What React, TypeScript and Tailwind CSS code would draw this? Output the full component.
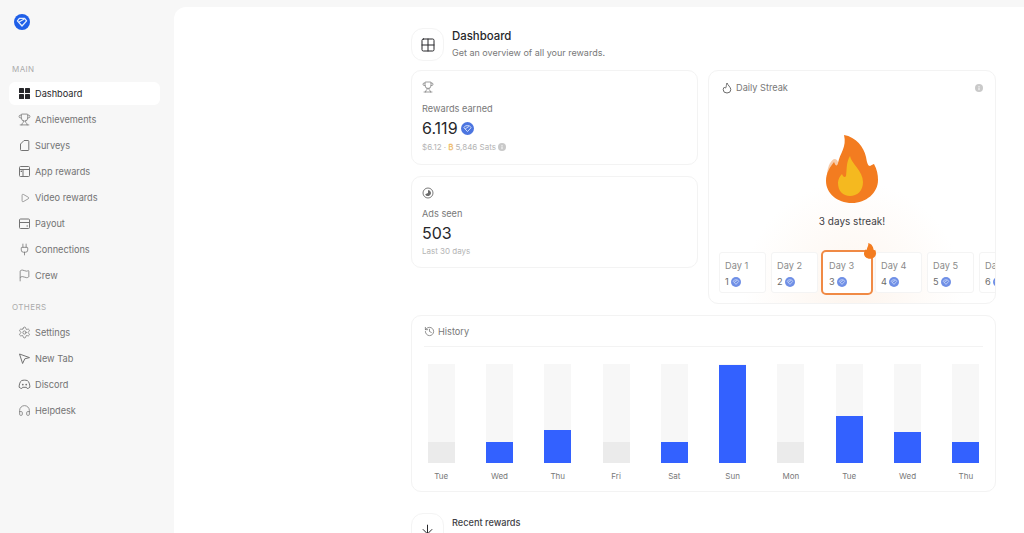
import { ArrowDown, Flag, Grid2x2, Headphones, History, Play, Plug, Settings, Trophy } from 'lucide-react';

function DashIcon() {
  return (
    <svg width="13" height="13" viewBox="0 0 13 13" fill="#27272a">
      <rect x="1" y="1" width="5" height="5" rx="0.6" />
      <rect x="7" y="1" width="5" height="5" rx="0.6" />
      <rect x="1" y="7" width="5" height="5" rx="0.6" />
      <rect x="7" y="7" width="5" height="5" rx="0.6" />
    </svg>
  );
}

function SurveyIcon() {
  return (
    <svg width="13" height="13" viewBox="0 0 13 13" fill="none" stroke="currentColor" strokeWidth="1">
      <path d="M2.5 5 L6 1.5 H10 A0.8 0.8 0 0 1 10.8 2.3 V10.7 A0.8 0.8 0 0 1 10 11.5 H3.3 A0.8 0.8 0 0 1 2.5 10.7 Z" strokeLinejoin="round" />
    </svg>
  );
}

function AppIcon() {
  return (
    <svg width="13" height="13" viewBox="0 0 13 13" fill="none" stroke="currentColor" strokeWidth="1">
      <rect x="1.5" y="1.5" width="10" height="10" rx="1" />
      <path d="M1.5 4.5 H11.5 M5 4.5 V11.5" />
      <rect x="2.6" y="5.6" width="1.4" height="1.4" fill="currentColor" stroke="none" />
    </svg>
  );
}

function PayoutIcon() {
  return (
    <svg width="13" height="13" viewBox="0 0 13 13" fill="none" stroke="currentColor" strokeWidth="1">
      <rect x="1.5" y="2" width="10" height="9.5" rx="1" />
      <path d="M1.5 5.5 H11.5" />
      <path d="M8.5 9 H10" />
    </svg>
  );
}

function CursorIcon() {
  return (
    <svg width="13" height="13" viewBox="0 0 13 13" fill="none" stroke="currentColor" strokeWidth="1" strokeLinejoin="round">
      <path d="M1.5 2 L11.5 5.6 L6.8 6.8 L4.6 11.5 Z" />
    </svg>
  );
}

function DiscordIcon() {
  return (
    <svg width="13" height="13" viewBox="0 0 13 13" fill="none" stroke="currentColor" strokeWidth="1" strokeLinejoin="round">
      <path d="M3.6 2.6 C5.5 2 7.5 2 9.4 2.6 C10.8 3.2 11.9 6.5 11.9 9.2 C11.2 10 10.2 10.4 9.2 10.5 L8.4 9.3 H4.6 L3.8 10.5 C2.8 10.4 1.8 10 1.1 9.2 C1.1 6.5 2.2 3.2 3.6 2.6 Z" />
      <circle cx="4.8" cy="6.6" r="0.9" fill="currentColor" stroke="none" />
      <circle cx="8.2" cy="6.6" r="0.9" fill="currentColor" stroke="none" />
    </svg>
  );
}

function Coin({ size, color = '#4c75e0' }: { size: number; color?: string }) {
  return (
    <svg width={size} height={size} viewBox="0 0 16 16" className="shrink-0">
      <circle cx="8" cy="8" r="8" fill={color} />
      <path d="M5.6 4.6 H10.4 L12.4 7 L8 11.8 L3.6 7 Z" fill="none" stroke="#dfe8fb" strokeWidth="1.1" strokeLinejoin="round" />
      <path d="M5 8.6 L10 5.4" stroke="#dfe8fb" strokeWidth="1" />
    </svg>
  );
}

function InfoDot({ size }: { size: number }) {
  return (
    <svg width={size} height={size} viewBox="0 0 10 10" className="shrink-0">
      <circle cx="5" cy="5" r="5" fill="#c9c9c9" />
      <rect x="4.4" y="4.3" width="1.2" height="3.4" fill="#fff" />
      <rect x="4.4" y="2.4" width="1.2" height="1.2" fill="#fff" />
    </svg>
  );
}

function BigFlame() {
  return (
    <svg width="52" height="69" viewBox="0 0 52 69">
      <path d="M1 41 C1 33 4 26 8 24 C11 24 12 26 12 28 L4 44 Z" fill="#f8cba9" />
      <path d="M18 0 C30 2 38 12 40 22 C41 28 42 31 44 31 C46 30 47 29 48 29 C51 34 52 40 52 45 C52 58 40 68 26 68 C11 68 0 58 0 46 C0 38 4 32 8 27 C10 32 11 31 12 28 C14 18 21 12 18 0 Z" fill="#f37c20" />
      <path d="M24 21 C25 28 37 36 37 47 C37 56 31 61 24 61 C17 61 12 56 12 48 C12 44 14 41 16 39 C17 42 19 43 20 41 C21 34 20 28 24 21 Z" fill="#f5b91f" />
    </svg>
  );
}

function SmallFlame() {
  return (
    <svg width="12" height="16" viewBox="0 0 52 69">
      <path d="M18 0 C30 2 38 12 40 22 C41 28 42 31 44 31 C46 30 47 29 48 29 C51 34 52 40 52 45 C52 58 40 68 26 68 C11 68 0 58 0 46 C0 38 4 32 8 27 C10 32 11 31 12 28 C14 18 21 12 18 0 Z" fill="#f37c20" />
    </svg>
  );
}

const mainNav = [
  { label: 'Dashboard', icon: <DashIcon />, active: true },
  { label: 'Achievements', icon: <Trophy size={13} strokeWidth={1.4} /> },
  { label: 'Surveys', icon: <SurveyIcon /> },
  { label: 'App rewards', icon: <AppIcon /> },
  { label: 'Video rewards', icon: <Play size={10} strokeWidth={1.6} /> },
  { label: 'Payout', icon: <PayoutIcon /> },
  { label: 'Connections', icon: <Plug size={13} strokeWidth={1.4} /> },
  { label: 'Crew', icon: <Flag size={13} strokeWidth={1.4} /> },
];

const otherNav = [
  { label: 'Settings', icon: <Settings size={13} strokeWidth={1.4} /> },
  { label: 'New Tab', icon: <CursorIcon /> },
  { label: 'Discord', icon: <DiscordIcon /> },
  { label: 'Helpdesk', icon: <Headphones size={13} strokeWidth={1.4} /> },
];

const history = [
  { day: 'Tue', h: 21, on: false },
  { day: 'Wed', h: 21, on: true },
  { day: 'Thu', h: 33, on: true },
  { day: 'Fri', h: 21, on: false },
  { day: 'Sat', h: 21, on: true },
  { day: 'Sun', h: 98, on: true },
  { day: 'Mon', h: 21, on: false },
  { day: 'Tue', h: 47, on: true },
  { day: 'Wed', h: 31, on: true },
  { day: 'Thu', h: 21, on: true },
];

function NavItem({ label, icon, active }: { label: string; icon: React.ReactNode; active?: boolean }) {
  return (
    <div className={active ? 'flex h-[23px] items-center rounded-md bg-white pl-[9px] text-[#27272a]' : 'flex h-[23px] items-center pl-[9px] text-[#737373]'}>
      <span className="flex w-[13px] justify-center">{icon}</span>
      <span className="ml-[4px] text-[9.2px]">{label}</span>
    </div>
  );
}

function DayCard({ n }: { n: number }) {
  const current = n === 3;
  return (
    <div
      className={
        current
          ? 'relative z-10 -mx-[2.5px] flex h-[45px] w-[52px] shrink-0 flex-col gap-[3px] rounded-[5px] border-2 border-[#f08a45] bg-white pl-[6.5px] pt-[7px]'
          : 'flex h-[41px] w-[47px] shrink-0 flex-col gap-[3px] rounded-[3px] border border-[#f4f4f4] bg-white pl-[5px] pt-[6px]'
      }
    >
      <span className="text-[9.2px] leading-[13px] text-[#8a8a8a]">Day {n}</span>
      <span className="flex items-center gap-[2px] text-[9.2px] leading-[13px] text-[#6b6b6b]">
        {n}
        <Coin size={10} color="#6f8fe6" />
      </span>
      {current && (
        <span className="absolute -right-[5.5px] -top-[9px]">
          <SmallFlame />
        </span>
      )}
    </div>
  );
}

export default function App() {
  return (
    <div className="flex h-[533px] w-[1024px] overflow-hidden bg-[#f7f7f7] font-['Inter',sans-serif]">
      <aside className="w-[174px] shrink-0 pl-[9px] pr-[14px]">
        <div className="ml-[5px] mt-[14px]">
          <svg width="16" height="16" viewBox="0 0 16 16">
            <circle cx="8" cy="8" r="8" fill="#1f5fe8" />
            <path d="M5.4 4.4 H10.6 L12.6 6.9 L8 12 L3.4 6.9 Z" fill="none" stroke="#e6eefc" strokeWidth="1.3" strokeLinejoin="round" />
            <path d="M5 8 L10.4 5" stroke="#e6eefc" strokeWidth="1.1" />
          </svg>
        </div>
        <p className="ml-[3px] mt-[34px] text-[8px] leading-[10px] tracking-[0.4px] text-[#ababab]">MAIN</p>
        <nav className="mt-[8px] flex flex-col gap-[3px]">
          {mainNav.map((item) => (
            <NavItem key={item.label} {...item} />
          ))}
        </nav>
        <p className="ml-[3px] mt-[15px] text-[8px] leading-[10px] tracking-[0.4px] text-[#ababab]">OTHERS</p>
        <nav className="mt-[9px] flex flex-col gap-[3px]">
          {otherNav.map((item) => (
            <NavItem key={item.label} {...item} />
          ))}
        </nav>
      </aside>

      <main className="mt-[7px] flex-1 rounded-tl-xl bg-white pl-[237px] pt-[22px]">
        <div className="w-[585px]">
          <div className="flex h-[31px] items-center gap-[8px]">
            <div className="flex h-[33px] w-[33px] items-center justify-center rounded-xl border border-[#f4f4f4] text-[#27272a]">
              <Grid2x2 size={16} strokeWidth={1.5} />
            </div>
            <div className="mb-[2px]">
              <p className="text-[11.4px] font-medium leading-[15px] text-[#27272a]">Dashboard</p>
              <p className="mt-[3px] text-[9px] leading-[12px] text-[#787878]">Get an overview of all your rewards.</p>
            </div>
          </div>

          <div className="mt-[10px] flex gap-[10px]">
            <div className="flex w-[287px] shrink-0 flex-col gap-[11px]">
              <div className="h-[95px] rounded-[10px] border border-[#f3f3f3] px-[10px] pt-[10px]">
                <Trophy size={12} strokeWidth={1.3} className="text-[#6b6b6b]" />
                <p className="mt-[10px] text-[9.2px] leading-[12px] text-[#787878]">Rewards earned</p>
                <div className="mt-[3px] flex h-[20px] items-center gap-[3px]">
                  <span className="text-[16px] text-[#27272a]">6.119</span>
                  <Coin size={13} />
                </div>
                <div className="mt-[4px] flex items-center gap-[2px] text-[8px] leading-[10px] text-[#b4b4b4]">
                  <span>$6.12 ·</span>
                  <span className="font-semibold text-[#eebc6d]">₿</span>
                  <span>5,846 Sats</span>
                  <InfoDot size={8} />
                </div>
              </div>
              <div className="h-[92px] rounded-[10px] border border-[#f3f3f3] px-[10px] pt-[10px]">
                <svg width="12" height="12" viewBox="0 0 12 12" fill="none" className="text-[#6b6b6b]">
                  <circle cx="6" cy="6" r="5" stroke="currentColor" strokeWidth="0.9" />
                  <path d="M6 3 A3 3 0 1 1 3.2 7.2 L6 6 Z" fill="currentColor" />
                </svg>
                <p className="mt-[9px] text-[9.2px] leading-[12px] text-[#787878]">Ads seen</p>
                <p className="mt-[3px] text-[16px] leading-[20px] text-[#27272a]">503</p>
                <p className="mt-[3px] text-[8px] leading-[10px] text-[#b4b4b4]">Last 30 days</p>
              </div>
            </div>

            <div className="relative h-[234px] w-[288px] overflow-hidden rounded-[10px] border border-[#f3f3f3]">
              <div className="absolute left-[34px] top-[110px] h-[220px] w-[220px] bg-[radial-gradient(closest-side,#fdf5ee,#ffffff)]" />
              <div className="relative flex items-center justify-between pl-[12px] pr-[12px] pt-[11px]">
                <div className="flex items-center gap-[3px]">
                  <svg width="12" height="12" viewBox="0 0 12 12" fill="none" stroke="#6b6b6b" strokeWidth="1" strokeLinejoin="round">
                    <path d="M6 1 C6.5 3 9.8 5 9.8 7.6 A3.8 3.4 0 0 1 2.2 7.6 C2.2 6.4 3 5.4 3.6 5 C3.8 6 4.4 6.2 4.8 5.8 C5.4 4.8 5.2 2.6 6 1 Z" />
                  </svg>
                  <span className="text-[9.2px] leading-[12px] text-[#787878]">Daily Streak</span>
                </div>
                <InfoDot size={8} />
              </div>
              <div className="relative mt-[41px] flex flex-col items-center">
                <div className="flex w-full justify-center">
                  <BigFlame />
                </div>
                <p className="mt-[11px] text-[10px] leading-[13px] text-[#3f3f46]">3 days streak!</p>
              </div>
              <div className="relative ml-[10px] mt-[22px] flex items-center gap-[5px]">
                {[1, 2, 3, 4, 5, 6].map((n) => (
                  <DayCard key={n} n={n} />
                ))}
              </div>
            </div>
          </div>

          <div className="mt-[11px] h-[177px] rounded-[10px] border border-[#f3f3f3]">
            <div className="mx-[12px] flex h-[31px] items-center gap-[3px] border-b border-[#f3f3f3] pt-[1px]">
              <History size={11} strokeWidth={1.6} className="text-[#6b6b6b]" />
              <span className="text-[9.2px] text-[#787878]">History</span>
            </div>
            <div className="mt-[17px] grid grid-cols-10">
              {history.map((bar, i) => (
                <div key={i} className="flex flex-col items-center">
                  <div className="flex h-[99px] w-[27px] items-end bg-[#f7f7f7]">
                    <div
                      className={bar.on ? 'w-full bg-[#3361ff]' : 'w-full bg-[#ebebeb]'}
                      style={{ height: bar.h }}
                    />
                  </div>
                  <span className="mt-[8px] text-[8px] leading-[10px] text-[#787878]">{bar.day}</span>
                </div>
              ))}
            </div>
          </div>

          <div className="mt-[21px] flex items-start gap-[8px]">
            <div className="flex h-[33px] w-[33px] items-center justify-center rounded-xl border border-[#f4f4f4] text-[#27272a]">
              <ArrowDown size={15} strokeWidth={1.6} />
            </div>
            <p className="mt-[4px] text-[9.2px] font-medium leading-[12px] text-[#3f3f46]">Recent rewards</p>
          </div>
        </div>
      </main>
    </div>
  );
}
